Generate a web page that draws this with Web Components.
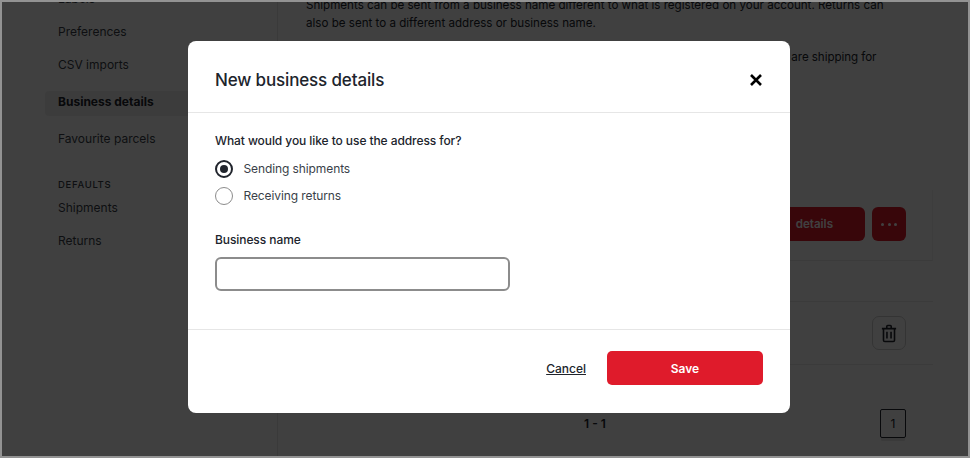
<!DOCTYPE html>
<html lang="en">
<head>
<meta charset="utf-8">
<title>New business details</title>
<style>
  html, body { margin: 0; height: 100%; background: #fff; }
  body { font-family: Inter, "Liberation Sans", sans-serif; color: #20242c; }
</style>
</head>
<body>
<settings-page>
  <side-nav slot="nav"></side-nav>
  <business-panel slot="main"></business-panel>
  <business-modal slot="modal"></business-modal>
</settings-page>

<script>
class SettingsPage extends HTMLElement {
    constructor() {
        super();
        this.attachShadow({ mode: 'open' });
        this.shadowRoot.innerHTML = `
            <style>
                :host {
                    display: block;
                    position: relative;
                    width: 970px;
                    height: 458px;
                    box-sizing: border-box;
                    overflow: hidden;
                    border: 2px solid #939393;
                }
                .layout {
                    display: flex;
                    height: 100%;
                    overflow: hidden;
                }
                .overlay {
                    position: absolute;
                    inset: 0;
                    background: rgba(0, 0, 0, .75);
                    display: flex;
                    justify-content: center;
                    align-items: flex-start;
                    padding: 39px 0 0 8px;
                    box-sizing: border-box;
                }
            </style>
            <div class="layout">
                <slot name="nav"></slot>
                <slot name="main"></slot>
            </div>
            <div class="overlay"><slot name="modal"></slot></div>
        `;
    }
}

class SideNav extends HTMLElement {
    constructor() {
        super();
        this.attachShadow({ mode: 'open' });
        this.shadowRoot.innerHTML = `
            <style>
                :host {
                    display: block;
                    flex: 0 0 276px;
                    box-sizing: border-box;
                    border-right: 1px solid #e6e6e6;
                    padding: 0 0 0 43px;
                    font-size: 12px;
                    line-height: 20px;
                    color: #3a3f49;
                }
                nav { margin-top: -13px; }
                a {
                    display: block;
                    padding: 0 13px;
                    height: 20px;
                    margin-bottom: 13px;
                }
                a.active {
                    background: #f0f0f0;
                    border-radius: 4px;
                    font-weight: 700;
                    color: #20242c;
                    height: 25px;
                    line-height: 22px;
                    margin: 16px 0 13px;
                }
                h4 {
                    margin: 29px 13px 6px;
                    font-size: 9.5px;
                    line-height: 14px;
                    font-weight: 500;
                    letter-spacing: .7px;
                }
            </style>
            <nav>
                <a>Labels</a>
                <a>Preferences</a>
                <a>CSV imports</a>
                <a class="active">Business details</a>
                <a>Favourite parcels</a>
                <h4>DEFAULTS</h4>
                <a>Shipments</a>
                <a>Returns</a>
            </nav>
        `;
    }
}

class BusinessPanel extends HTMLElement {
    constructor() {
        super();
        this.attachShadow({ mode: 'open' });
        this.shadowRoot.innerHTML = `
            <style>
                :host {
                    display: block;
                    flex: 1;
                    box-sizing: border-box;
                    padding: 0 0 0 28px;
                    font-size: 11.6px;
                    line-height: 18px;
                    color: #20242c;
                }
                .intro { margin: -6px 0 0; width: 590px; }
                .intro p { margin: 0 0 16px; white-space: nowrap; }
                .intro p.more { letter-spacing: -.057px; }
                .toolbar {
                    width: 627px;
                    box-sizing: border-box;
                    margin-top: 124px;
                    padding-top: 17px;
                    border-right: 1px solid #f4f4f4;
                    border-bottom: 1px solid #ececec;
                }
                .actions {
                    display: flex;
                    justify-content: flex-end;
                    gap: 7px;
                    width: 600px;
                    padding-bottom: 19px;
                }
                .btn {
                    height: 34px;
                    border-radius: 6px;
                    background: #e01a2b;
                    color: #fff;
                    display: flex;
                    align-items: center;
                    justify-content: center;
                    font-weight: 600;
                    font-size: 11.6px;
                }
                .btn.add { width: 170px; box-sizing: border-box; justify-content: flex-end; padding-right: 32px; word-spacing: 3px; }
                .btn.more { width: 34px; gap: 3.5px; }
                .btn.more i { width: 3px; height: 3px; border-radius: 50%; background: #fff; }
                .row {
                    width: 627px;
                    border-bottom: 1px solid #ececec;
                    display: flex;
                    justify-content: flex-end;
                    align-items: center;
                    box-sizing: border-box;
                    padding-right: 27px;
                }
                .row.head { height: 41px; }
                .row.body { height: 63px; }
                .trash {
                    width: 34px;
                    height: 34px;
                    box-sizing: border-box;
                    border: 1px solid #cfcfcf;
                    border-radius: 7px;
                    display: flex;
                    align-items: center;
                    justify-content: center;
                }
                .pager {
                    display: flex;
                    width: 600px;
                    align-items: center;
                    margin-top: 44px;
                }
                .count {
                    flex: 1;
                    text-align: center;
                    padding-left: 4px;
                    font-weight: 600;
                    font-size: 12px;
                    color: #20242c;
                }
                .page {
                    width: 26px;
                    height: 29px;
                    box-sizing: border-box;
                    border: 1px solid #20242c;
                    border-radius: 2px;
                    font-size: 12px;
                    display: flex;
                    align-items: center;
                    justify-content: center;
                    box-shadow: 0 4px 0 -1px #e8e8e8;
                }
            </style>
            <div class="intro">
                <p>Shipments can be sent from a business name different to what is registered on your account. Returns can<br>also be sent to a different address or business name.</p>
                <p class="more">You can also add the business details of any of the other companies or clients whom you are shipping for</p>
            </div>
            <div class="toolbar">
                <div class="actions">
                    <div class="btn add">Add business details</div>
                    <div class="btn more"><i></i><i></i><i></i></div>
                </div>
            </div>
            <div class="row head"></div>
            <div class="row body">
                <div class="trash">
                    <svg width="16" height="19" viewBox="0 0 18 20" fill="none" stroke="#20242c" stroke-width="1.8">
                        <path d="M1 4.5h16M6.5 4.5V2a1 1 0 0 1 1-1h3a1 1 0 0 1 1 1v2.5"/>
                        <path d="M2.8 4.5v13a1.5 1.5 0 0 0 1.5 1.5h9.4a1.5 1.5 0 0 0 1.5-1.5v-13"/>
                        <path d="M6.7 8v7.5M11.3 8v7.5"/>
                    </svg>
                </div>
            </div>
            <div class="pager">
                <div class="count">1 - 1</div>
                <div class="page">1</div>
            </div>
        `;
    }
}

class RadioOption extends HTMLElement {
    constructor() {
        super();
        this.attachShadow({ mode: 'open' });
        this.shadowRoot.innerHTML = `
            <style>
                :host {
                    display: flex;
                    align-items: center;
                    gap: 10.5px;
                    height: 27px;
                    font-size: 12px;
                    letter-spacing: -.1px;
                    color: #3a3f49;
                }
                .dot {
                    width: 18px;
                    height: 18px;
                    box-sizing: border-box;
                    border-radius: 50%;
                    border: 1.5px solid #8c8c8c;
                    display: flex;
                    align-items: center;
                    justify-content: center;
                }
                :host([checked]) .dot { border: 2px solid #20242c; }
                :host([checked]) .dot::after {
                    content: '';
                    width: 8px;
                    height: 8px;
                    border-radius: 50%;
                    background: #20242c;
                }
            </style>
            <span class="dot"></span>
            <span><slot></slot></span>
        `;
    }
}
customElements.define('radio-option', RadioOption);

class BusinessModal extends HTMLElement {
    constructor() {
        super();
        this.attachShadow({ mode: 'open' });
        this.shadowRoot.innerHTML = `
            <style>
                :host {
                    display: block;
                    width: 602px;
                    height: 372px;
                    background: #fff;
                    border-radius: 8px;
                    color: #20242c;
                    font-size: 12px;
                }
                header {
                    height: 72px;
                    box-sizing: border-box;
                    border-bottom: 1px solid #e6e6e6;
                    display: flex;
                    align-items: center;
                    justify-content: space-between;
                    padding: 6px 27px 0;
                }
                h2 { margin: 0; font-size: 17px; font-weight: 500; line-height: 24px; letter-spacing: -.15px; }
                .close { display: flex; }
                .content { padding: 18px 27px 0; height: 217px; box-sizing: border-box; border-bottom: 1px solid #e6e6e6; }
                .label { font-weight: 500; line-height: 20px; letter-spacing: -.08px; }
                .radios { margin-top: 4px; }
                .name { margin-top: 21px; }
                .field {
                    margin-top: 7px;
                    width: 295px;
                    height: 34px;
                    box-sizing: border-box;
                    border: 2px solid #8c8c8c;
                    border-radius: 6px;
                }
                footer {
                    display: flex;
                    justify-content: flex-end;
                    align-items: center;
                    gap: 21px;
                    padding: 21px 27px 0;
                }
                .cancel { font-weight: 500; text-decoration: underline; }
                .save {
                    width: 156px;
                    height: 34px;
                    border-radius: 5px;
                    background: #df1b2b;
                    color: #fff;
                    font-size: 12px;
                    font-weight: 600;
                    display: flex;
                    align-items: center;
                    justify-content: center;
                }
            </style>
            <header>
                <h2>New business details</h2>
                <span class="close">
                    <svg width="14" height="14" viewBox="0 0 14 14" fill="none" stroke="#000" stroke-width="2.6">
                        <path d="M2 2l10 10M12 2L2 12"/>
                    </svg>
                </span>
            </header>
            <div class="content">
                <div class="label">What would you like to use the address for?</div>
                <div class="radios">
                    <radio-option checked>Sending shipments</radio-option>
                    <radio-option>Receiving returns</radio-option>
                </div>
                <div class="label name">Business name</div>
                <div class="field"></div>
            </div>
            <footer>
                <span class="cancel">Cancel</span>
                <span class="save">Save</span>
            </footer>
        `;
    }
}

customElements.define('settings-page', SettingsPage);
customElements.define('side-nav', SideNav);
customElements.define('business-panel', BusinessPanel);
customElements.define('business-modal', BusinessModal);
</script>
</body>
</html>
